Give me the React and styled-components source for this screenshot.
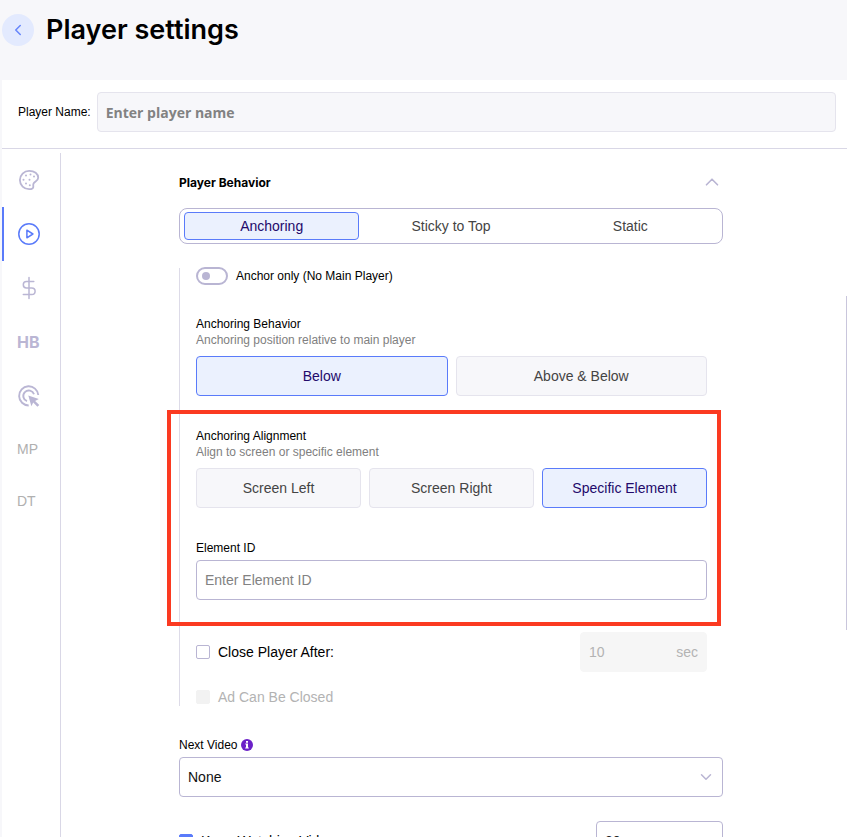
import { useState } from 'react';
import styled, { createGlobalStyle, css } from 'styled-components';
import { ChevronDown, ChevronLeft, ChevronUp } from 'lucide-react';

const GlobalStyle = createGlobalStyle`
  * {
    box-sizing: border-box;
  }

  body {
    margin: 0;
    background: #f7f7fa;
    color: #000;
    font-family: "Liberation Sans", Arial, sans-serif;
    font-size: 14px;
  }

  button, input, select {
    font: inherit;
    color: inherit;
    margin: 0;
  }
`

const Page = styled.div`
  display: flex;
  flex-direction: column;
  height: 100vh;
  padding-left: 2px;
  overflow: hidden;
`

const Header = styled.header`
  display: flex;
  align-items: center;
  gap: 12px;
  flex: none;
  height: 80px;
  padding-bottom: 20px;
`

const BackButton = styled.button`
  display: flex;
  align-items: center;
  justify-content: center;
  width: 32px;
  height: 32px;
  padding: 0;
  border: 0;
  border-radius: 50%;
  background: #e3eafe;
  color: #6685fb;
`

const Title = styled.h1`
  margin: 0;
  font-family: "Inter", sans-serif;
  font-size: 27px;
  font-weight: 600;
  line-height: 32px;
`

const Card = styled.main`
  display: flex;
  flex-direction: column;
  flex: 1;
  min-height: 0;
  background: #fff;
`

const NameRow = styled.div`
  display: flex;
  align-items: center;
  gap: 6px;
  flex: none;
  padding: 12px 11px 16px 16px;
  border-bottom: 1px solid #d9d7e6;
`

const Label = styled.label`
  display: flex;
  align-items: center;
  gap: 4px;
  font-size: 12px;
  line-height: 16px;
`

const TextInput = styled.input`
  flex: 1;
  width: 100%;
  min-width: 0;
  height: 40px;
  padding: 0 8px;
  border: 1px solid #b9b5d3;
  border-radius: 4px;
  background: #fff;
  outline: none;

  &::placeholder {
    color: #828282;
    opacity: 1;
  }
`

const NameInput = styled(TextInput)`
  border-color: #e5e4ed;
  background: #f7f7fa;
  font-family: "Open Sans", sans-serif;
  font-size: 14px;
  font-weight: 700;
`

const Body = styled.div`
  position: relative;
  display: flex;
  flex: 1;
  min-height: 0;
`

const Sidebar = styled.nav`
  flex: none;
  width: 59px;
  margin-top: 4px;
  border-right: 1px solid #d9d7e6;
`

const SideItem = styled.button`
  display: flex;
  align-items: center;
  width: 100%;
  height: ${({ $short }) => ($short ? 52 : 54)}px;
  padding: 0 0 0 13px;
  border: 0;
  border-left: 2px solid ${({ $active }) => ($active ? '#5a7bfa' : 'transparent')};
  background: none;
  color: ${({ $active }) => ($active ? '#5a7bfa' : '#bab6d4')};
`

const SideText = styled.span`
  color: #b0b0b0;
  font-size: 14px;
`

const SideLogo = styled.span`
  font-family: "Inter", sans-serif;
  font-size: 16px;
  font-weight: 700;
`

const Content = styled.div`
  flex: 1;
  min-width: 0;
  padding: 20px 6px 0 0;
  overflow: hidden;
`

const Column = styled.div`
  width: calc(100% - 32px);
  max-width: 544px;
  margin: 0 auto;
`

const ScrollThumb = styled.div`
  position: absolute;
  top: 147px;
  right: 0;
  width: 1px;
  height: 334px;
  background: #c9c6dc;
`

const SectionButton = styled.button`
  display: flex;
  align-items: center;
  justify-content: space-between;
  width: 100%;
  height: 26px;
  padding: 0;
  border: 0;
  background: none;
  font-family: "Inter", sans-serif;
  font-size: 12px;
  font-weight: 700;

  svg {
    color: #b9b5d3;
  }
`

const Segmented = styled.div`
  display: flex;
  gap: 4px;
  height: 36px;
  margin-top: 13px;
  padding: 3px 4px;
  border: 1px solid #b9b5d3;
  border-radius: 8px;
`

const activeOption = css`
  border-color: #5a7bfa;
  background: #ebf1fe;
  color: #230a6b;
`

const Segment = styled.button`
  flex: 1 1 0;
  padding: 0;
  border: 1px solid transparent;
  border-radius: 4px;
  background: none;
  color: #444;
  ${({ $active }) => $active && activeOption}
`

const Nested = styled.div`
  display: flex;
  flex-direction: column;
  gap: 32px;
  margin-top: 24px;
  padding: 0 16px;
  border-left: 1px solid #dddbe8;
`

const ToggleRow = styled.label`
  display: flex;
  align-items: center;
  gap: 8px;
  height: 16px;
  font-size: 12px;
`

const Toggle = styled.input`
  appearance: none;
  display: flex;
  align-items: center;
  width: 32px;
  height: 18px;
  padding: 0 4px;
  border: 2px solid #b9b5d3;
  border-radius: 9px;

  &::before {
    content: "";
    width: 8px;
    height: 8px;
    border-radius: 50%;
    background: #b9b5d3;
  }

  &:checked {
    justify-content: flex-end;
    border-color: #5a7bfa;
  }
`

const GroupLabel = styled.div`
  font-size: 12px;
  line-height: 16px;
`

const Hint = styled.div`
  color: #808080;
  font-size: 12px;
  line-height: 16px;
`

const Options = styled.div`
  display: flex;
  gap: 8px;
  margin-top: 8px;
`

const Option = styled.button`
  flex: 1 1 0;
  height: 40px;
  padding: 0;
  border: 1px solid #e5e4ed;
  border-radius: 4px;
  background: #f7f7fa;
  color: #444;
  ${({ $active }) => $active && activeOption}
`

const Highlighted = styled.div`
  position: relative;
  display: flex;
  flex-direction: column;
  gap: 32px;

  &::after {
    content: "";
    position: absolute;
    inset: -18px -14px -26px -29px;
    border: 4px solid #fb3a21;
    pointer-events: none;
  }
`

const Field = styled.div`
  display: flex;
  flex-direction: column;
  gap: 4px;

  ${TextInput} {
    flex: none;
  }
`

const CloseRows = styled.div`
  display: flex;
  flex-direction: column;
  gap: 16px;
`

const Row = styled.div`
  display: flex;
  align-items: center;
  justify-content: space-between;
`

const CheckLabel = styled.label`
  display: flex;
  align-items: center;
  gap: 8px;
  line-height: 18px;
  color: ${({ $disabled }) => ($disabled ? '#b3b3b3' : '#000')};
`

const Checkbox = styled.input`
  appearance: none;
  width: 14px;
  height: 14px;
  border: 1px solid #b9b5d3;
  border-radius: 2px;
  background: #fff;

  &:checked {
    border-color: #5a7bfa;
    background: #5a7bfa;
  }

  &:disabled {
    border-color: #f2f2f2;
    background: #f2f2f2;
  }
`

const NumberBox = styled.div`
  display: flex;
  align-items: center;
  width: 127px;
  height: 40px;
  padding: 0 8px;
  border: 1px solid ${({ $disabled }) => ($disabled ? '#f6f6f6' : '#b9b5d3')};
  border-radius: 4px;
  background: ${({ $disabled }) => ($disabled ? '#f6f6f6' : '#fff')};
  color: ${({ $disabled }) => ($disabled ? '#b3b3b3' : '#222')};

  input {
    flex: 1;
    min-width: 0;
    padding: 0;
    border: 0;
    background: none;
    outline: none;
  }
`

const NextVideo = styled(Field)`
  margin: 31px 0 24px;
`

const SelectBox = styled.div`
  display: grid;
  align-items: center;

  select, svg {
    grid-area: 1 / 1;
  }

  select {
    appearance: none;
    width: 100%;
    height: 40px;
    padding: 0 8px;
    border: 1px solid #b9b5d3;
    border-radius: 4px;
    background: #fff;
    color: #111;
  }

  svg {
    justify-self: end;
    margin-right: 8px;
    color: #b9b5d3;
    pointer-events: none;
  }
`

const PaletteIcon = () => (
  <svg width="24" height="24" viewBox="0 0 24 24" fill="none" stroke="currentColor" strokeWidth="1.8" strokeLinejoin="round">
    <path d="M12.2 2.8C7 2.8 2.9 7 2.9 12c0 5.400 4.200 9.200 9.200 9.200 2.900 0 4.200-.5 4.200-2.200 0-1.200-.3-2.200.2-3.400.9-2.200 4.700-2.700 4.700-5.900C21.200 5.800 17.500 2.800 12.200 2.800Z" />
    <g fill="currentColor" stroke="none">
      <circle cx="9" cy="7.500" r="1" />
      <circle cx="13.500" cy="6.500" r="1" />
      <circle cx="17" cy="8.500" r="1" />
      <circle cx="6.500" cy="11.800" r="1" />
      <circle cx="12.500" cy="11.800" r="1" />
      <circle cx="9" cy="15.500" r="1" />
      <circle cx="12.800" cy="17.300" r="1" />
    </g>
  </svg>
)

const PlayIcon = () => (
  <svg width="24" height="24" viewBox="0 0 24 24" fill="none" stroke="currentColor" strokeWidth="1.5" strokeLinejoin="round">
    <circle cx="12" cy="12" r="10.200" />
    <path d="M9.900 8.200v7.600l6-3.800Z" />
  </svg>
)

const DollarIcon = () => (
  <svg width="24" height="24" viewBox="0 0 24 24" fill="none" stroke="currentColor" strokeWidth="1.5" strokeLinecap="round">
    <path d="M12 1.500v21M16.800 5.600H9.500a3.200 3.200 0 0 0 0 6.400h5.300a3.300 3.300 0 0 1 0 6.600H6.300" />
  </svg>
)

const TargetIcon = () => (
  <svg width="24" height="24" viewBox="0 0 24 24" fill="none" stroke="currentColor" strokeWidth="1.9">
    <path d="M11.700 21.500A9.600 9.600 0 1 1 21.300 11" />
    <path d="M10 17.200A5.500 5.500 0 1 1 17 10.200" />
    <path d="m11.300 11.500 10.500 3.500-3.700 1.900 4.200 4-1.900 1.900-4.200-4.200-1.800 3.700Z" fill="currentColor" stroke="none" />
  </svg>
)

const InfoIcon = () => (
  <svg width="12" height="12" viewBox="0 0 12 12" role="img" aria-label="Info">
    <circle cx="6" cy="6" r="6" fill="#6b21c8" />
    <path d="M5 2h2v1.700H5zM4.300 4.600H7v3.900h.8v1H4.200v-1H5V5.600h-.7z" fill="#fff" />
  </svg>
)

const sideItems = [
  { id: 'look', title: 'Appearance', content: <PaletteIcon /> },
  { id: 'behavior', title: 'Behavior', content: <PlayIcon /> },
  { id: 'money', title: 'Monetization', content: <DollarIcon /> },
  { id: 'hb', title: 'HB', content: <SideLogo>HB</SideLogo> },
  { id: 'target', title: 'Targeting', content: <TargetIcon /> },
  { id: 'mp', title: 'MP', content: <SideText>MP</SideText>, short: true },
  { id: 'dt', title: 'DT', content: <SideText>DT</SideText>, short: true },
]

const App = () => {
  const [section, setSection] = useState('behavior')
  const [mode, setMode] = useState('Anchoring')
  const [position, setPosition] = useState('Below')
  const [alignment, setAlignment] = useState('Specific Element')

  return (
    <Page>
      <GlobalStyle />
      <Header>
        <BackButton aria-label="Back"><ChevronLeft size={18} /></BackButton>
        <Title>Player settings</Title>
      </Header>

      <Card>
        <NameRow>
          <Label htmlFor="playerName">Player Name:</Label>
          <NameInput id="playerName" type="text" placeholder="Enter player name" />
        </NameRow>

        <Body>
          <Sidebar>
            {sideItems.map(item => (
              <SideItem
                key={item.id}
                aria-label={item.title}
                $active={section === item.id}
                $short={item.short}
                onClick={() => setSection(item.id)}
              >
                {item.content}
              </SideItem>
            ))}
          </Sidebar>

          <Content>
            <Column>
              <SectionButton>
                Player Behavior
                <ChevronUp size={22} strokeWidth={1.8} />
              </SectionButton>

              <Segmented>
                {['Anchoring', 'Sticky to Top', 'Static'].map(name => (
                  <Segment key={name} $active={mode === name} onClick={() => setMode(name)}>{name}</Segment>
                ))}
              </Segmented>

              <Nested>
                <ToggleRow>
                  <Toggle type="checkbox" role="switch" />
                  Anchor only (No Main Player)
                </ToggleRow>

                <div>
                  <GroupLabel>Anchoring Behavior</GroupLabel>
                  <Hint>Anchoring position relative to main player</Hint>
                  <Options>
                    {['Below', 'Above & Below'].map(name => (
                      <Option key={name} $active={position === name} onClick={() => setPosition(name)}>{name}</Option>
                    ))}
                  </Options>
                </div>

                <Highlighted>
                  <div>
                    <GroupLabel>Anchoring Alignment</GroupLabel>
                    <Hint>Align to screen or specific element</Hint>
                    <Options>
                      {['Screen Left', 'Screen Right', 'Specific Element'].map(name => (
                        <Option key={name} $active={alignment === name} onClick={() => setAlignment(name)}>{name}</Option>
                      ))}
                    </Options>
                  </div>
                  <Field>
                    <Label htmlFor="elementId">Element ID</Label>
                    <TextInput id="elementId" type="text" placeholder="Enter Element ID" />
                  </Field>
                </Highlighted>

                <CloseRows>
                  <Row>
                    <CheckLabel><Checkbox type="checkbox" />Close Player After:</CheckLabel>
                    <NumberBox $disabled>
                      <input type="text" defaultValue="10" aria-label="Seconds" disabled />
                      sec
                    </NumberBox>
                  </Row>
                  <CheckLabel $disabled><Checkbox type="checkbox" disabled />Ad Can Be Closed</CheckLabel>
                </CloseRows>
              </Nested>

              <NextVideo>
                <Label htmlFor="nextVideo">Next Video <InfoIcon /></Label>
                <SelectBox>
                  <select id="nextVideo">
                    <option>None</option>
                  </select>
                  <ChevronDown size={18} strokeWidth={2} />
                </SelectBox>
              </NextVideo>

              <Row>
                <CheckLabel><Checkbox type="checkbox" defaultChecked />Keep Watching Video</CheckLabel>
                <NumberBox>
                  <input type="text" defaultValue="20" aria-label="Keep watching" />
                </NumberBox>
              </Row>
            </Column>
          </Content>
          <ScrollThumb />
        </Body>
      </Card>
    </Page>
  )
}

export default App;
